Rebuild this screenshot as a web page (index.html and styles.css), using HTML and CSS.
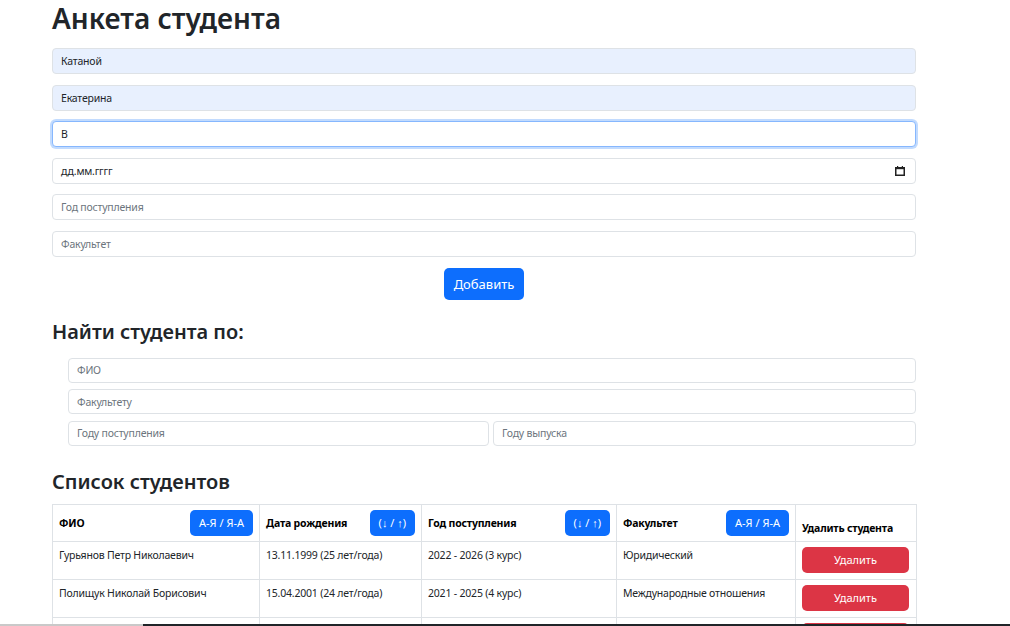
FILE: index.html
```html
<!DOCTYPE html>
<html lang="ru">
<head>
<meta charset="utf-8">
<title>Анкета студента</title>
<link rel="stylesheet" href="styles.css">
</head>
<body>
<main class="page">
  <h1 class="title">Анкета студента</h1>
  <form class="form">
    <input class="field autofill" type="text" value="Катаной">
    <input class="field autofill" type="text" value="Екатерина">
    <input class="field focused" type="text" value="В">
    <div class="field date">
      <span class="date-text">дд.мм.гггг</span>
      <svg class="cal" width="10" height="10" viewBox="0 0 10 10"><rect x="0.75" y="1.75" width="8.5" height="7.5" fill="none" stroke="#222" stroke-width="1.5"/><rect x="0" y="1" width="10" height="2.2" fill="#222"/><rect x="2" y="0" width="1.2" height="2" fill="#222"/><rect x="6.8" y="0" width="1.2" height="2" fill="#222"/></svg>
    </div>
    <input class="field" type="text" placeholder="Год поступления">
    <input class="field" type="text" placeholder="Факультет">
    <div class="actions"><button type="button" class="btn btn-primary btn-add">Добавить</button></div>
  </form>

  <h2 class="subtitle find-title">Найти студента по:</h2>
  <div class="search">
    <input class="field sm" type="text" placeholder="ФИО">
    <input class="field sm" type="text" placeholder="Факультету">
    <div class="search-row">
      <input class="field sm" type="text" placeholder="Году поступления">
      <input class="field sm" type="text" placeholder="Году выпуска">
    </div>
  </div>

  <h2 class="subtitle list-title">Список студентов</h2>
  <table class="table">
    <colgroup>
      <col class="c1"><col class="c2"><col class="c3"><col class="c4"><col class="c5">
    </colgroup>
    <thead>
      <tr>
        <th><div class="th-flex"><span>ФИО</span><button type="button" class="btn btn-primary btn-sort">А-Я / Я-А</button></div></th>
        <th><div class="th-flex"><span>Дата рождения</span><button type="button" class="btn btn-primary btn-sort">(↓ / ↑)</button></div></th>
        <th><div class="th-flex"><span>Год поступления</span><button type="button" class="btn btn-primary btn-sort">(↓ / ↑)</button></div></th>
        <th><div class="th-flex"><span>Факультет</span><button type="button" class="btn btn-primary btn-sort">А-Я / Я-А</button></div></th>
        <th class="th-del">Удалить студента</th>
      </tr>
    </thead>
    <tbody>
      <tr>
        <td>Гурьянов Петр Николаевич</td>
        <td>13.11.1999 (25 лет/года)</td>
        <td>2022 - 2026 (3 курс)</td>
        <td>Юридический</td>
        <td><button type="button" class="btn btn-danger btn-del">Удалить</button></td>
      </tr>
      <tr>
        <td>Полищук Николай Борисович</td>
        <td>15.04.2001 (24 лет/года)</td>
        <td>2021 - 2025 (4 курс)</td>
        <td>Международные отношения</td>
        <td><button type="button" class="btn btn-danger btn-del">Удалить</button></td>
      </tr>
      <tr>
        <td></td>
        <td></td>
        <td></td>
        <td></td>
        <td><button type="button" class="btn btn-danger btn-del" aria-label="Удалить"></button></td>
      </tr>
    </tbody>
  </table>
</main>
<div class="bottom-bar"><span class="bb-light"></span><span class="bb-dark"></span></div>
</body>
</html>
```

FILE: styles.css
```css
* { box-sizing: border-box; }
html, body { margin: 0; padding: 0; background: #fff; }
body {
  font-family: "Noto Sans", "Open Sans", "Liberation Sans", sans-serif;
  color: #212529;
  font-size: 12px;
  overflow: hidden;
  height: 626px;
}
.page {
  width: 864px;
  margin-left: 52px;
}
.title {
  margin: 0;
  padding-top: 1px;
  font-size: 28px;
  font-weight: 600;
  line-height: 34px;
  height: 37px;
}
.form {
  display: flex;
  flex-direction: column;
  gap: 10.6px;
  margin-top: 11px;
}
.field {
  display: block;
  width: 100%;
  height: 26px;
  padding: 0 8px;
  font-family: inherit;
  font-size: 10.5px;
  letter-spacing: -0.2px;
  color: #212529;
  background: #fff;
  border: 1px solid #dee2e6;
  border-radius: 4px;
  outline: none;
}
.field::placeholder { color: #6c757d; }
.field.autofill { background: #e8f0fe; }
.field.focused {
  border-color: #86b7fe;
  box-shadow: 0 0 0 2px rgba(13, 110, 253, 0.25);
}
.field.date {
  display: flex;
  align-items: center;
  justify-content: space-between;
  padding-right: 10px;
}
.cal { display: block; }
.actions {
  display: flex;
  justify-content: center;
}
.btn {
  font-family: inherit;
  border: none;
  border-radius: 5px;
  color: #fff;
  cursor: pointer;
}
.btn-primary { background: #0d6efd; }
.btn-danger { background: #dc3545; }
.btn-add {
  width: 80px;
  height: 32px;
  font-size: 13px;
}
.subtitle {
  margin: 0;
  font-size: 20px;
  font-weight: 600;
  line-height: 26px;
}
.find-title { margin-top: 19px; }
.search {
  margin-top: 13px;
  margin-left: 16px;
  display: flex;
  flex-direction: column;
  gap: 6.5px;
}
.field.sm { height: 25px; }
.search-row {
  display: flex;
  gap: 4px;
}
.search-row .field:first-child { width: 421px; flex: none; }
.search-row .field:last-child { flex: 1; }
.list-title { margin-top: 23px; }
.table {
  margin-top: 9px;
  width: 864px;
  border-collapse: collapse;
  table-layout: fixed;
  font-size: 10.5px;
  letter-spacing: -0.2px;
}
.c1 { width: 207px; }
.c2 { width: 162px; }
.c3 { width: 195px; }
.c4 { width: 179px; }
.c5 { width: 121px; }
.table th, .table td {
  border: 1px solid #dee2e6;
  padding: 6px;
  text-align: left;
}
.table th {
  height: 37px;
  padding-top: 5px;
  padding-bottom: 5px;
  font-weight: 700;
  color: #000;
  vertical-align: middle;
}
.th-flex {
  display: flex;
  align-items: center;
  justify-content: space-between;
}
.th-del { vertical-align: bottom !important; padding-bottom: 6px !important; }
.btn-sort {
  height: 26px;
  padding: 0 9px;
  font-size: 11px;
  letter-spacing: 0;
  white-space: nowrap;
}
.table td {
  height: 38px;
  vertical-align: top;
  padding-top: 6px;
  padding-bottom: 5px;
}
.btn-del {
  width: 107px;
  height: 26px;
  font-size: 11px;
  letter-spacing: 0;
  display: block;
  margin-top: -1px;
}
.bottom-bar {
  position: fixed;
  left: 0;
  right: 0;
  bottom: 0;
  height: 2px;
  display: flex;
}
.bb-light { width: 143px; background: #c9c9c9; }
.bb-dark { flex: 1; background: #202428; }
```
